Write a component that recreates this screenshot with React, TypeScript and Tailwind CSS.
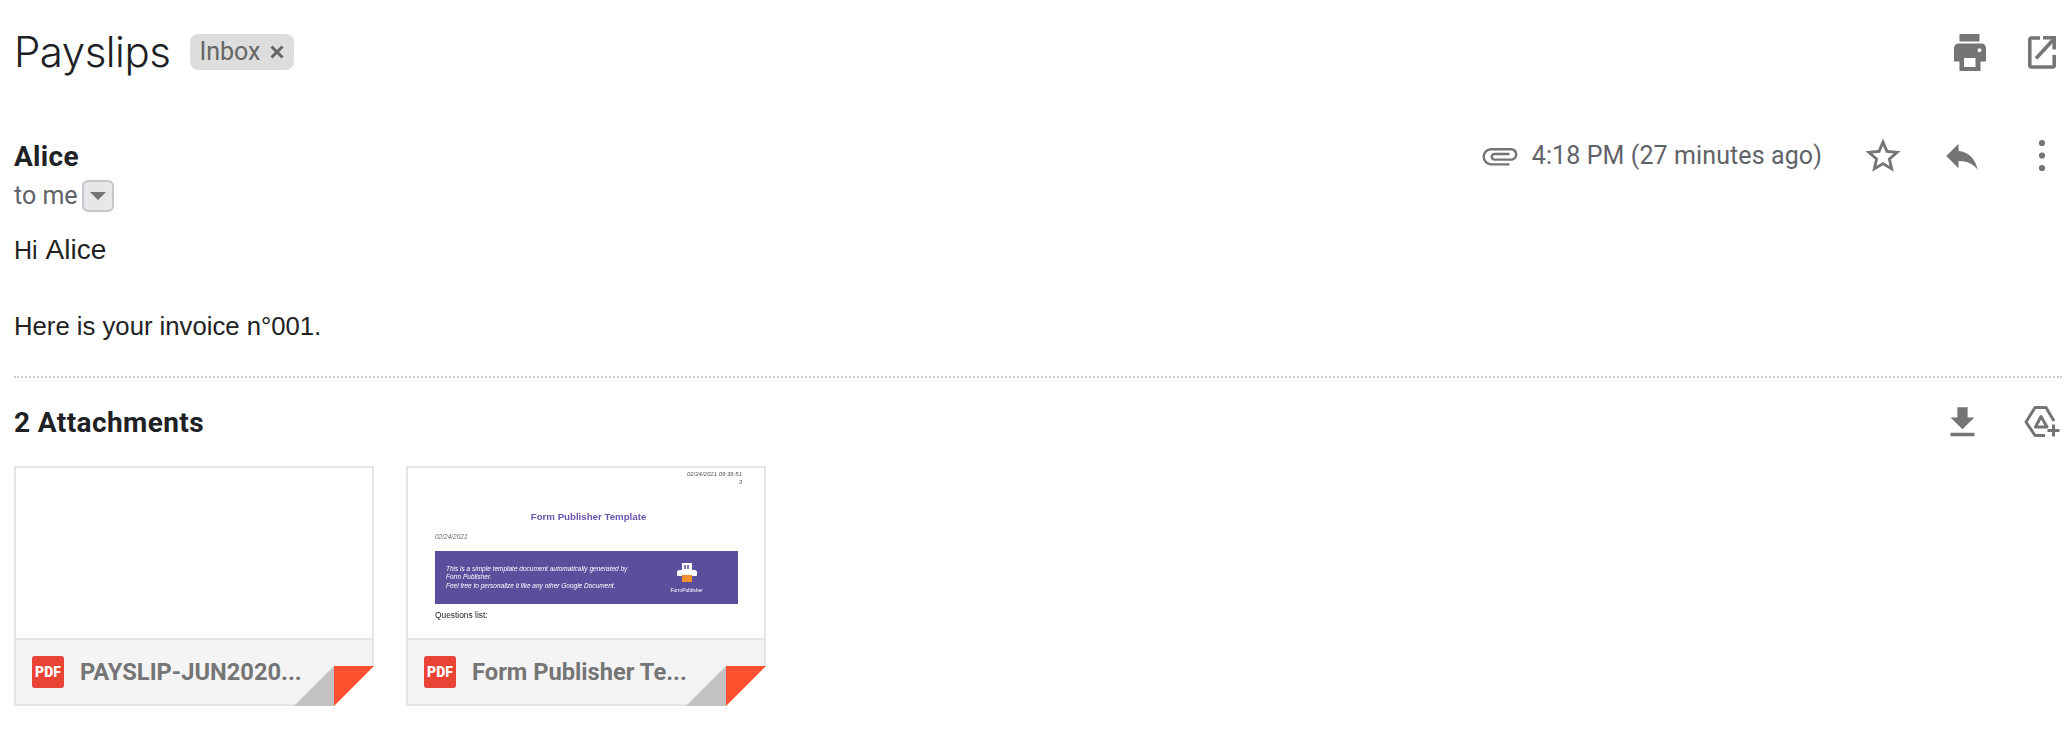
const G = "#757575";

function Print() {
  return (
    <svg width="32" height="37" viewBox="0 0 32 37" fill={G} fillRule="evenodd">
      <path d="M5.5 0H25.5V7.5H5.5Z" />
      <path d="M4.5 9.5H27.5C30 9.5 32 11.5 32 14V27.5H26.5V37H5.5V27.5H0V14C0 11.5 2 9.5 4.5 9.5ZM10 24V33H21.5V24ZM25.5 14.2A2 2 0 1 0 25.5 18.2A2 2 0 1 0 25.5 14.2Z" />
    </svg>
  );
}
function OpenNew() {
  return (
    <svg width="28" height="33" viewBox="0 0 28 33" fill="none" stroke={G} strokeWidth="3.6">
      <path d="M12 2H3.5C2.4 2 1.8 2.6 1.8 3.7V29.3C1.8 30.4 2.4 31 3.5 31H24.5C25.6 31 26.2 30.4 26.2 29.3V19" />
      <path d="M8 22.5L25 4" />
      <path d="M15 1.8H26.2V13.5" />
    </svg>
  );
}
function Clip() {
  return (
    <svg width="38" height="38" viewBox="0 0 24 24" fill={G} className="rotate-90">
      <path d="M16.5 6v11.5c0 2.21-1.79 4-4 4s-4-1.79-4-4V5c0-1.38 1.12-2.5 2.5-2.5s2.5 1.12 2.5 2.5v10.5c0 .55-.45 1-1 1s-1-.45-1-1V6H10v9.5c0 1.38 1.12 2.5 2.5 2.5s2.5-1.12 2.5-2.5V5c0-2.21-1.79-4-4-4S7 2.79 7 5v12.5c0 3.04 2.46 5.5 5.5 5.5s5.5-2.46 5.5-5.5V6h-1.5z" />
    </svg>
  );
}
function Star() {
  return (
    <svg width="42" height="42" viewBox="0 0 24 24" fill={G}>
      <path d="M22 9.24l-7.19-.62L12 2 9.19 8.63 2 9.24l5.46 4.73L5.82 21 12 17.27 18.18 21l-1.63-7.03L22 9.24zM12 15.4l-3.76 2.27 1-4.28-3.32-2.88 4.38-.38L12 6.1l1.71 4.04 4.38.38-3.32 2.88 1 4.28L12 15.4z" />
    </svg>
  );
}
function Reply() {
  return (
    <svg width="42" height="42" viewBox="0 0 24 24" fill={G}>
      <path d="M10 9V5l-7 7 7 7v-4.1c5 0 8.5 1.6 11 5.1-1-5-4-10-11-11z" />
    </svg>
  );
}
function Dots() {
  return (
    <svg width="8" height="34" viewBox="0 0 8 34" fill={G}>
      <circle cx="4" cy="4" r="3.1" />
      <circle cx="4" cy="16.5" r="3.1" />
      <circle cx="4" cy="29" r="3.1" />
    </svg>
  );
}
function Download() {
  return (
    <svg width="41" height="41" viewBox="0 0 24 24" fill={G}>
      <path d="M19 9h-4V3H9v6H5l7 7 7-7zM5 18v2h14v-2H5z" />
    </svg>
  );
}
function DriveAdd() {
  return (
    <svg width="36" height="32" viewBox="0 0 36 32" fill="none" stroke={G} strokeWidth="3" strokeLinejoin="round">
      <path d="M21 29.5H11L2 16L11 1.6H22L30 15" />
      <path d="M17 10.5L11.5 21H23Z" />
      <path d="M23.5 24.5H35.5M29.5 18.5V30.5" />
    </svg>
  );
}

function PdfIcon() {
  return (
    <div className="flex h-8 w-8 shrink-0 items-center justify-center rounded-[3px] bg-[#ea4335] font-['Roboto',sans-serif] text-[14px] font-black text-white">
      PDF
    </div>
  );
}

function Card({ name, children }: { name: string; children?: React.ReactNode }) {
  return (
    <div className="relative flex h-[240px] w-[360px] flex-col border-2 border-[#e4e4e4]">
      <div className="h-[170px] overflow-hidden bg-white">{children}</div>
      <div className="flex flex-1 items-start gap-4 border-t-2 border-[#e4e4e4] bg-[#f4f4f4] pl-4 pt-4">
        <PdfIcon />
        <span className="font-['Roboto',sans-serif] text-[23.7px] leading-8 font-bold text-[#757575]">{name}</span>
      </div>
      <svg className="absolute right-[-2px] bottom-[-2px]" width="80" height="40" viewBox="0 0 80 40">
        <path d="M80 0V40H40Z" fill="#ffffff" />
        <path d="M40 0H80L40 40Z" fill="#ff5030" />
        <path d="M40 0V40H0Z" fill="#c2c2c2" />
      </svg>
    </div>
  );
}

function DocPreview() {
  return (
    <div className="flex h-full flex-col pl-[27px] pr-[22px] font-['Liberation_Sans',sans-serif] blur-[0.7px]">
      <div className="pt-[2px] text-right text-[6px] leading-[8px] text-[#555] italic">
        02/24/2021 09:36:51
        <br />3
      </div>
      <div className="pt-[24px] text-center text-[9.7px] leading-[14px] font-bold text-[#6a55ad]">Form Publisher Template</div>
      <div className="pt-[9px] text-[6.5px] leading-[8px] text-[#666] italic">02/24/2021</div>
      <div className="mt-[10px] flex h-[53px] w-[303px] items-center justify-between bg-[#5a4e9d] pl-[11px] pr-[35px] text-white">
        <div className="text-[6.5px] leading-[8.6px] italic">
          This is a simple template document automatically generated by
          <br />
          Form Publisher.
          <br />
          Feel free to personalize it like any other Google Document.
        </div>
        <div className="flex flex-col items-center">
          <svg width="20" height="21" viewBox="0 0 20 21">
            <path d="M5 1H15V8H5Z" fill="#fff" />
            <path d="M2 8H18C19 8 20 9 20 10V13C20 14 19 14 18 14H2C1 14 0 14 0 13V10C0 9 1 8 2 8Z" fill="#fff" />
            <path d="M5 13H15V20H5Z" fill="#f0902c" />
            <path d="M8 3V7M11 3V7" stroke="#5a4e9d" strokeWidth="1.5" />
          </svg>
          <span className="pt-[4px] text-[5px] leading-[6px]">FormPublisher</span>
        </div>
      </div>
      <div className="pt-[6px] text-[8.4px] leading-[10px] text-[#222]">Questions list:</div>
    </div>
  );
}

export default function App() {
  return (
    <div className="h-[742px] w-[2068px] overflow-hidden bg-white pl-[14px] pr-[6px] font-['Roboto',sans-serif]">
      <header className="flex h-[104px] items-center">
        <h1 className="font-['Inter',sans-serif] text-[42px] leading-[50px] font-light tracking-[-0.5px] text-[#202124]">Payslips</h1>
        <span className="ml-[20px] flex h-[36px] items-center rounded-[8px] bg-[#dddddd] pl-[9px] pr-[10px] text-[25px] text-[#666666]">
          Inbox
          <svg className="ml-[10px]" width="14" height="14" viewBox="0 0 14 14" stroke="#666" strokeWidth="3">
            <path d="M1.5 1.5L12.5 12.5M12.5 1.5L1.5 12.5" />
          </svg>
        </span>
        <div className="ml-auto flex items-center gap-[42px] pr-[6px]">
          <Print />
          <OpenNew />
        </div>
      </header>

      <section className="flex h-[112px] items-start justify-between">
        <div className="flex flex-col pt-[34px]">
          <div className="text-[28px] leading-[38px] font-bold tracking-[0.3px] text-[#202124]">Alice</div>
          <div className="flex items-center pt-[4px] text-[25px] leading-[32px] text-[#5f6368]">
            to me
            <span className="ml-[4px] flex h-[32px] w-[32px] items-center justify-center rounded-[6px] border-2 border-[#c4c7cb] bg-[#e6e7e9]">
              <svg width="16" height="8" viewBox="0 0 16 8" fill="#757575">
                <path d="M0 0H16L8 8Z" />
              </svg>
            </span>
          </div>
        </div>
        <div className="flex items-center pt-[31px]">
          <Clip />
          <span className="ml-[13px] text-[25px] leading-[42px] tracking-[0.1px] text-[#5f6368]">4:18 PM (27 minutes ago)</span>
          <span className="ml-[40px]"><Star /></span>
          <span className="ml-[37px]"><Reply /></span>
          <span className="ml-[55px] mr-[16px]"><Dots /></span>
        </div>
      </section>

      <main className="font-['Liberation_Sans',sans-serif] text-[#222222]">
        <div className="flex items-baseline pt-[16px] leading-[36px]">
          <span className="text-[25px]">Hi</span>
          <span className="ml-[8px] text-[28px]">Alice</span>
        </div>
        <div className="pt-[40px] text-[25.7px] leading-[36px]">Here is your invoice n°001.</div>
      </main>

      <div className="mt-[32px] border-t-2 border-dotted border-[#cccccc]" />

      <section className="flex h-[88px] items-center justify-between">
        <div className="pt-[2px] text-[28px] font-bold tracking-[0.4px] text-[#202124]">2 Attachments</div>
        <div className="flex items-center gap-[41px] pr-[2px]">
          <Download />
          <DriveAdd />
        </div>
      </section>

      <div className="flex gap-[32px]">
        <Card name="PAYSLIP-JUN2020..." />
        <Card name="Form Publisher Te...">
          <DocPreview />
        </Card>
      </div>
    </div>
  );
}
